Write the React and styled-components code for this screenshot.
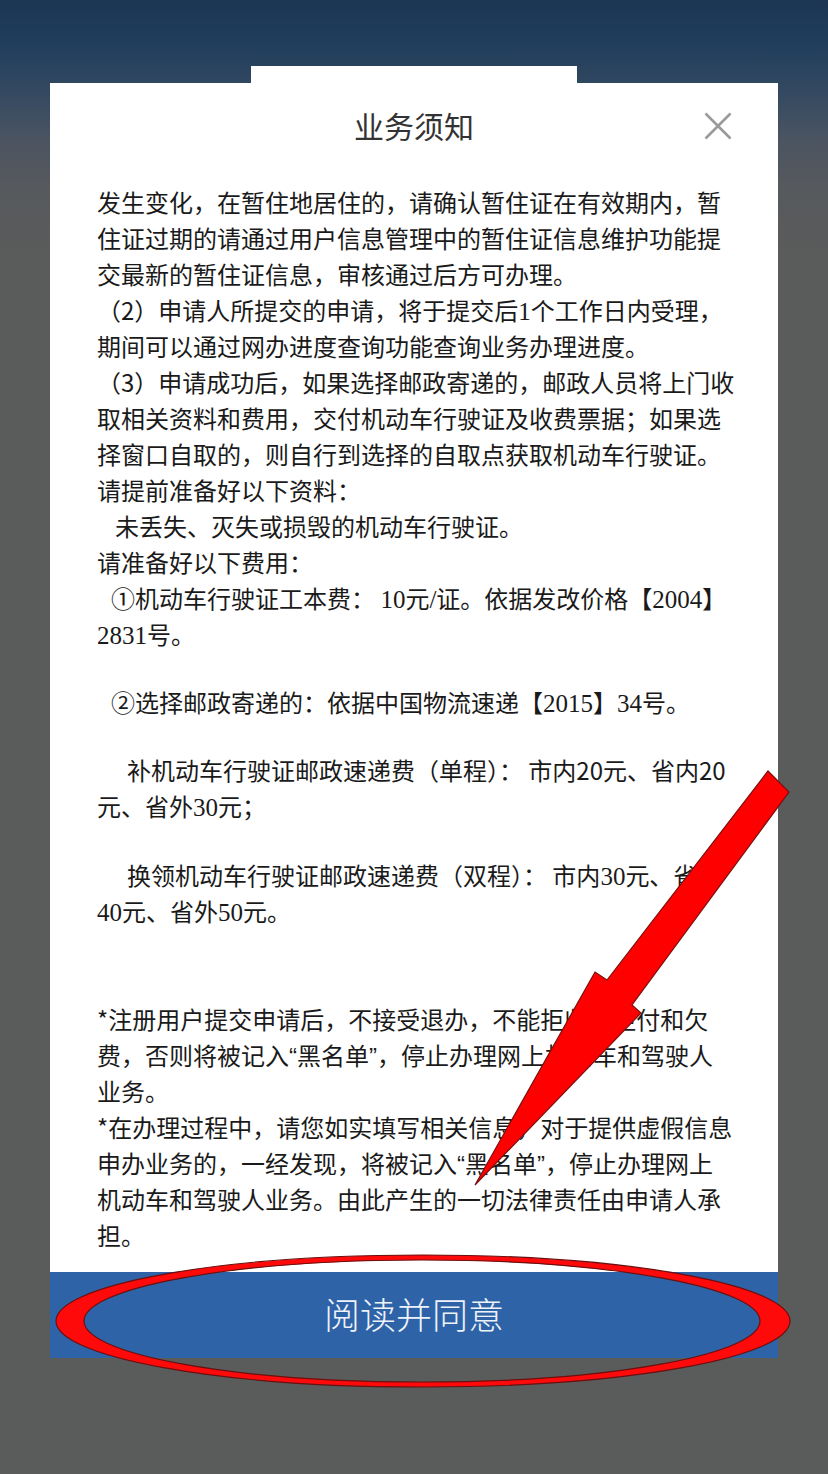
import React from "react";
import styled, { createGlobalStyle } from "styled-components";

const GlobalStyle = createGlobalStyle`
  html, body { margin: 0; padding: 0; }
  body {
    width: 828px;
    min-height: 1474px;
    background: linear-gradient(180deg, #1c3654 0px, #213e5d 45px, #354a61 95px, #4b5461 140px, #56595d 185px, #5a5b5b 250px, #5a5b5b 100%);
    font-family: "Noto Sans CJK SC", "Noto Sans", sans-serif;
  }
`;

const Page = styled.div`
  position: relative;
  width: 828px;
  height: 1474px;
  padding-top: 66px;
  box-sizing: border-box;
  display: flex;
  flex-direction: column;
  align-items: center;
  overflow: hidden;
`;

const Tab = styled.div`
  width: 326px;
  height: 17px;
  background: #ffffff;
`;

const Modal = styled.section`
  width: 728px;
  background: #ffffff;
  display: flex;
  flex-direction: column;
`;

const Header = styled.header`
  height: 88px;
  box-sizing: border-box;
  padding-bottom: 5px;
  display: grid;
  grid-template-columns: 1fr auto 1fr;
  align-items: center;
`;

const Title = styled.h1`
  grid-column: 2;
  margin: 0;
  font-size: 30px;
  font-weight: 400;
  color: #333333;
  line-height: 1;
`;

const Close = styled.button`
  grid-column: 3;
  justify-self: end;
  margin-right: 45px;
  margin-top: 3px;
  width: 30px;
  height: 30px;
  padding: 0;
  border: 0;
  background: transparent;
  display: flex;
  align-items: center;
  justify-content: center;
`;

const Body = styled.div`
  padding: 13px 0 19px 47px;
  color: #1a1a1a;
  font-size: 24px;
  line-height: 36px;
`;

const Line = styled.div`
  white-space: nowrap;
  height: 36px;
  padding-left: ${(p) => p.$indent || 0}px;
`;

const Gap = styled.div`
  height: ${(p) => p.$h}px;
`;

const Serif = styled.span`
  font-family: "Liberation Serif", "Times New Roman", serif;
  font-size: 25px;
`;

const Quote = styled.span`
  font-family: "Liberation Sans", Arial, sans-serif;
`;

const AgreeButton = styled.button`
  height: 86px;
  border: 0;
  margin: 0;
  background: #2f63a7;
  color: #eef3fa;
  font-family: "Noto Sans CJK SC", sans-serif;
  font-size: 36px;
  font-weight: 300;
  display: flex;
  align-items: center;
  justify-content: center;
  padding: 0 0 4px;
`;

const Overlay = styled.svg`
  position: absolute;
  left: 0;
  top: 0;
  pointer-events: none;
`;

export default function App() {
  return (
    <>
      <GlobalStyle />
      <Page>
        <Tab />
        <Modal>
          <Header>
            <Title>业务须知</Title>
            <Close aria-label="关闭">
              <svg width="28" height="28" viewBox="0 0 28 28">
                <path d="M1.5 1.5 L26.5 26.5 M26.5 1.5 L1.5 26.5" stroke="#9a9a9a" strokeWidth="2.6" fill="none" />
              </svg>
            </Close>
          </Header>
          <Body>
            <Line>发生变化，在暂住地居住的，请确认暂住证在有效期内，暂</Line>
            <Line>住证过期的请通过用户信息管理中的暂住证信息维护功能提</Line>
            <Line>交最新的暂住证信息，审核通过后方可办理。</Line>
            <Line>（2）申请人所提交的申请，将于提交后<Serif>1</Serif>个工作日内受理，</Line>
            <Line>期间可以通过网办进度查询功能查询业务办理进度。</Line>
            <Line>（3）申请成功后，如果选择邮政寄递的，邮政人员将上门收</Line>
            <Line>取相关资料和费用，交付机动车行驶证及收费票据；如果选</Line>
            <Line>择窗口自取的，则自行到选择的自取点获取机动车行驶证。</Line>
            <Line>请提前准备好以下资料：</Line>
            <Line $indent={18}>未丢失、灭失或损毁的机动车行驶证。</Line>
            <Line>请准备好以下费用：</Line>
            <Line $indent={14}>①机动车行驶证工本费： <Serif>10</Serif>元<Serif>/</Serif>证。依据发改价格【<Serif>2004</Serif>】</Line>
            <Line><Serif>2831</Serif>号。</Line>
            <Gap $h={32} />
            <Line $indent={14}>②选择邮政寄递的：依据中国物流速递【<Serif>2015</Serif>】<Serif>34</Serif>号。</Line>
            <Gap $h={32} />
            <Line $indent={30}>补机动车行驶证邮政速递费（单程）： 市内20元、省内20</Line>
            <Line>元、省外<Serif>30</Serif>元；</Line>
            <Gap $h={33} />
            <Line $indent={30}>换领机动车行驶证邮政速递费（双程）： 市内<Serif>30</Serif>元、省内</Line>
            <Line><Serif>40</Serif>元、省外<Serif>50</Serif>元。</Line>
            <Gap $h={72} />
            <Line>*注册用户提交申请后，不接受退办，不能拒收、拒付和欠</Line>
            <Line>费，否则将被记入<Quote>“</Quote>黑名单<Quote>”</Quote>，停止办理网上机动车和驾驶人</Line>
            <Line>业务。</Line>
            <Line>*在办理过程中，请您如实填写相关信息，对于提供虚假信息</Line>
            <Line>申办业务的，一经发现，将被记入<Quote>“</Quote>黑名单<Quote>”</Quote>，停止办理网上</Line>
            <Line>机动车和驾驶人业务。由此产生的一切法律责任由申请人承</Line>
            <Line>担。</Line>
          </Body>
          <AgreeButton>阅读并同意</AgreeButton>
        </Modal>
        <Overlay width="828" height="1474" viewBox="0 0 828 1474">
          <path
            fillRule="evenodd"
            d="M56 1321 A367 66 0 1 0 790 1321 A367 66 0 1 0 56 1321 Z M84 1321 A338 61 0 1 0 760 1321 A338 61 0 1 0 84 1321 Z"
            fill="#ff0a0a"
            stroke="#6a1010"
            strokeWidth="1.2"
          />
          <polygon
            points="768,771 789,792 632,1005 641,1013 475,1185 595,972 607,980"
            fill="#ff0000"
            stroke="#7a1010"
            strokeWidth="1.2"
            strokeLinejoin="miter"
          />
        </Overlay>
      </Page>
    </>
  );
}
